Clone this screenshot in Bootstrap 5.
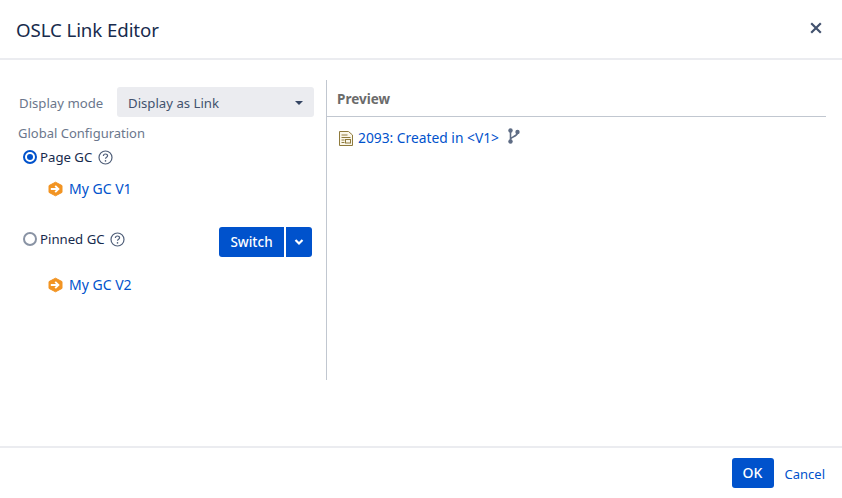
<!DOCTYPE html>
<html lang="en">
<head>
<meta charset="utf-8">
<title>OSLC Link Editor</title>
<link rel="stylesheet" href="https://cdn.jsdelivr.net/npm/bootstrap@5.3.0/dist/css/bootstrap.min.css">
<style>
html,body{height:498px;overflow:hidden;background:#fff}
body{font-family:"Noto Sans","Open Sans",sans-serif;font-size:14px;color:#172b4d;line-height:20px}
.dlg{width:842px;height:498px;display:flex;flex-direction:column}
.dlg-head{height:60px;padding:0 16px;border-bottom:2px solid #ebecf0;flex:none}
.dlg-title{font-size:18.7px;font-weight:400;margin:2px 0 0;line-height:24px;color:#172b4d;letter-spacing:-.1px}
.dlg-x{width:14px;height:14px;margin-right:3px;margin-top:-3px}
.dlg-body{height:386px;padding-top:20px;flex:none}
.left-pane{width:327px;height:300px;border-right:1px solid #c1c7d0;flex:none;position:relative}
.mode-row{padding:7px 12px 0 19px;height:37px}
.mode-lbl{width:98px;color:#6b778c;font-size:13.2px;padding-top:1px}
.mode-sel{width:197px;height:30px;background:#ebecf0;border-radius:3px;padding:1px 11px 0;font-size:13.2px;color:#42526e}
.caret-d{width:0;height:0;border-left:4px solid transparent;border-right:4px solid transparent;border-top:4px solid #344563}
.gc-title{padding-left:18px;color:#6b778c;line-height:18px;margin-top:7px;font-size:13px}
.gc-row{padding-left:23px;height:20px;font-size:13.2px}
.radio-on{width:14px;height:14px;border-radius:50%;border:2px solid #0052cc;flex:none;display:flex;align-items:center;justify-content:center;margin-right:3px}
.radio-on i{display:block;width:6px;height:6px;border-radius:50%;background:#0052cc}
.radio-off{width:14px;height:14px;border-radius:50%;border:2px solid #8993a4;flex:none;margin-right:3px}
.gc-link{padding-left:48px;height:20px;font-size:14px}
.hex-ic{flex:none;margin-right:6px}
.lnk{color:#0052cc;text-decoration:none}
.btn-go{background:#0052cc;border:0;border-radius:3px;color:#fff;height:30px;font-size:13.5px;font-weight:500;padding:0;line-height:30px}
.btn-sw{width:65px;border-radius:3px 0 0 3px}
.btn-ch{width:26px;border-radius:0 3px 3px 0;margin-left:2px;display:flex;align-items:center;justify-content:center}
.pinned{padding-right:14px;padding-left:23px;height:30px;margin-top:28px}
.pv-head{height:37px;padding-left:10px;border-bottom:1px solid #c1c7d0;font-weight:700;color:#6b6b6b;font-size:13.5px;line-height:39px;width:499px}
.pv-row{padding:11px 0 0 12px;font-size:13.8px}
.dlg-foot{flex:1;border-top:2px solid #ebecf0;padding:10px 17px 0 0}
.btn-ok{width:42px;height:30px;line-height:30px;padding:0;font-size:14px}
.lnk-c{margin-left:11px;font-size:13px;line-height:32px}
.help-ic{flex:none}
.help-a{margin-left:6px}
.help-b{margin-left:5px}
.doc-ic{flex:none;margin-right:5px}
.branch-ic{flex:none;margin-left:9px;margin-top:-4px}
.first-row{margin-top:5px}
.link-a{margin-top:12px}
.link-b{margin-top:18px}
.pin-lbl{height:20px;margin-top:2px}
</style>
</head>
<body>
<div class="dlg">
  <header class="dlg-head d-flex align-items-center justify-content-between">
    <h1 class="dlg-title">OSLC Link Editor</h1>
    <svg class="dlg-x" viewBox="0 0 14 14"><path d="M2.200 2.200l9.600 9.600M11.800 2.200l-9.600 9.600" stroke="#42526e" stroke-width="2.200" fill="none"/></svg>
  </header>
  <main class="dlg-body d-flex">
    <section class="left-pane">
      <div class="mode-row d-flex align-items-center">
        <span class="mode-lbl">Display mode</span>
        <div class="mode-sel d-flex align-items-center justify-content-between"><span>Display as Link</span><span class="caret-d"></span></div>
      </div>
      <div class="gc-title">Global Configuration</div>
      <div class="gc-row first-row d-flex align-items-center">
        <span class="radio-on"><i></i></span><span>Page GC</span>
        <svg class="help-ic help-a" width="15" height="15" viewBox="0 0 15 15"><circle cx="7.500" cy="7.500" r="6.500" fill="none" stroke="#505f79" stroke-width="1.200"/><path d="M5.400 6c0-2.600 4.200-2.600 4.200-.2 0 1.500-2.100 1.500-2.100 3" fill="none" stroke="#505f79" stroke-width="1.200"/><circle cx="7.500" cy="10.900" r=".8" fill="#505f79"/></svg>
      </div>
      <div class="gc-link link-a d-flex align-items-center">
        <svg class="hex-ic" width="15" height="16" viewBox="0 0 15 16"><path d="M7.500 1.200l6.500 3.400v6.800l-6.500 3.400L1 11.400V4.600z" fill="#f29423" stroke="#f29423" stroke-linejoin="round"/><path d="M2.800 8h7.500M7.200 4.800l3.200 3.200-3.200 3.200" stroke="#fff" stroke-width="1.900" fill="none"/></svg>
        <a class="lnk" href="#">My GC V1</a>
      </div>
      <div class="pinned d-flex align-items-start justify-content-between">
        <div class="pin-lbl gc-row ps-0 d-flex align-items-center">
          <span class="radio-off"></span><span>Pinned GC</span>
          <svg class="help-ic help-b" width="15" height="15" viewBox="0 0 15 15"><circle cx="7.500" cy="7.500" r="6.500" fill="none" stroke="#505f79" stroke-width="1.200"/><path d="M5.400 6c0-2.600 4.200-2.600 4.200-.2 0 1.500-2.100 1.500-2.100 3" fill="none" stroke="#505f79" stroke-width="1.200"/><circle cx="7.500" cy="10.900" r=".8" fill="#505f79"/></svg>
        </div>
        <div class="d-flex">
          <button class="btn-go btn-sw" type="button">Switch</button>
          <button class="btn-go btn-ch" type="button" aria-label="More"><svg width="10" height="8" viewBox="0 0 10 8"><path d="M1.500 2l3.500 3.500L8.500 2" stroke="#fff" stroke-width="2.200" fill="none"/></svg></button>
        </div>
      </div>
      <div class="gc-link link-b d-flex align-items-center">
        <svg class="hex-ic" width="15" height="16" viewBox="0 0 15 16"><path d="M7.500 1.200l6.500 3.400v6.800l-6.500 3.400L1 11.400V4.600z" fill="#f29423" stroke="#f29423" stroke-linejoin="round"/><path d="M2.800 8h7.500M7.200 4.800l3.200 3.200-3.200 3.200" stroke="#fff" stroke-width="1.900" fill="none"/></svg>
        <a class="lnk" href="#">My GC V2</a>
      </div>
    </section>
    <section>
      <div class="pv-head">Preview</div>
      <div class="pv-row d-flex align-items-center">
        <svg class="doc-ic" width="14" height="15" viewBox="0 0 14 15"><path d="M.5.500h9l4 3.500v10.500H.5z" fill="#fbf7ea" stroke="#8f7a3c"/><path d="M2.500 4h6M2.500 6.500h9" stroke="#8f7a3c"/><rect x="6.500" y="8.500" width="5" height="3.500" fill="none" stroke="#8f7a3c"/><path d="M2.500 9h3M2.500 11.500h3" stroke="#8f7a3c"/></svg>
        <a class="lnk" href="#">2093: Created in &lt;V1&gt;</a>
        <svg class="branch-ic" width="12" height="16" viewBox="0 0 12 16"><circle cx="2.500" cy="2.500" r="2.200" fill="#5e6c84"/><circle cx="2.500" cy="13.500" r="2.200" fill="#5e6c84"/><circle cx="9.500" cy="4" r="2.200" fill="#5e6c84"/><path d="M2.500 3v10M2.500 11.500c0-3 7-2.500 7-7" stroke="#5e6c84" stroke-width="1.600" fill="none"/></svg>
      </div>
    </section>
  </main>
  <footer class="dlg-foot d-flex align-items-start justify-content-end">
    <button class="btn-go btn-ok" type="button">OK</button>
    <a class="lnk lnk-c" href="#">Cancel</a>
  </footer>
</div>
<script src="https://cdn.jsdelivr.net/npm/bootstrap@5.3.0/dist/js/bootstrap.bundle.min.js"></script>
</body>
</html>
